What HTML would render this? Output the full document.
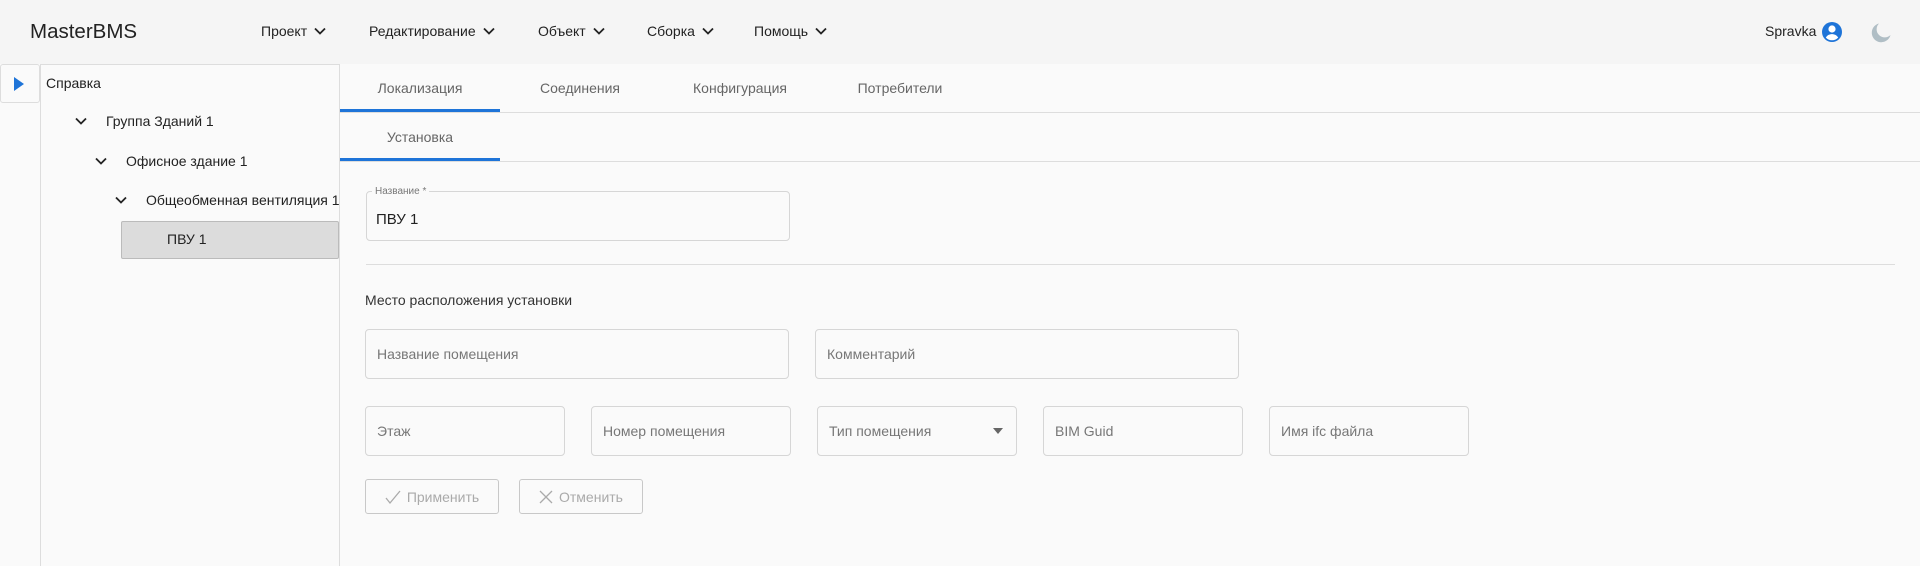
<!DOCTYPE html>
<html><head><meta charset="utf-8"><style>
*{box-sizing:border-box;margin:0;padding:0}
body{width:1920px;height:566px;overflow:hidden;background:#fafafa;font-family:"Liberation Sans","Noto Sans CJK SC",sans-serif;color:#222;position:relative}
.a{position:absolute;white-space:nowrap}
.hdr{left:0;top:0;width:1920px;height:64px;background:#f5f5f5}
.menu{font-size:14px;color:#222;top:23px}
.chev{display:inline-block;vertical-align:middle;margin-left:7px;margin-top:-3px}
.tree{font-size:14px;color:#222}
.tab{font-size:14px;color:#666;text-align:center;width:160px}
.f{border:1px solid #d6d6d6;border-radius:4px;background:#fafafa}
.ph{font-size:14px;color:#777;position:absolute;left:13px;top:50%;transform:translateY(-50%)}
.btn{border:1px solid #c8c8c8;border-radius:3px;font-size:14px;color:#aaa;display:flex;align-items:center;justify-content:center;gap:6px}
</style></head><body>
<div class="a hdr"></div>
<div class="a" style="left:30px;top:20px;font-size:20.5px;color:#222">MasterBMS</div>
<svg width="0" height="0" style="position:absolute"><defs><symbol id="cv" viewBox="0 0 12 8"><path d="M1 1.5l5 5 5-5" fill="none" stroke="#222" stroke-width="1.8"/></symbol></defs></svg>
<div class="a menu" style="left:261px">Проект<svg class="chev" width="12" height="8"><use href="#cv"/></svg></div>
<div class="a menu" style="left:369px">Редактирование<svg class="chev" width="12" height="8"><use href="#cv"/></svg></div>
<div class="a menu" style="left:538px">Объект<svg class="chev" width="12" height="8"><use href="#cv"/></svg></div>
<div class="a menu" style="left:647px">Сборка<svg class="chev" width="12" height="8"><use href="#cv"/></svg></div>
<div class="a menu" style="left:754px">Помощь<svg class="chev" width="12" height="8"><use href="#cv"/></svg></div>
<div class="a" style="left:1765px;top:23px;font-size:14px">Spravka</div>
<svg class="a" style="left:1821px;top:21px" width="22" height="22" viewBox="0 0 22 22"><circle cx="11" cy="11" r="10" fill="#1e74d8"/><circle cx="11" cy="8" r="3.6" fill="#fff"/><path d="M4.8 16.5c1.5-2.4 3.8-3.4 6.2-3.4s4.7 1 6.2 3.4c-1.6 1.8-3.8 2.8-6.2 2.8s-4.6-1-6.2-2.8z" fill="#fff"/></svg>
<svg class="a" style="left:1870px;top:22px" width="22" height="22" viewBox="0 0 22 22"><path d="M9 1.5A9.5 9.5 0 1 0 20.5 13 7 7 0 0 1 9 1.5z" fill="#b0bec5"/></svg>

<div class="a" style="left:0;top:64px;width:40px;height:39px;border:1px solid #ddd;border-radius:3px;background:#fafafa"></div>
<svg class="a" style="left:14px;top:77px" width="10" height="14"><path d="M0 0L10 7 0 14z" fill="#1e74d8"/></svg>
<div class="a" style="left:40px;top:64px;width:300px;height:502px;border-left:1px solid #ddd;border-right:1px solid #ddd;border-top:1px solid #ddd;background:#fafafa"></div>
<div class="a tree" style="left:46px;top:75px">Справка</div>
<svg class="a" style="left:75px;top:117px" width="12" height="8"><use href="#cv"/></svg>
<div class="a tree" style="left:106px;top:113px">Группа Зданий 1</div>
<svg class="a" style="left:95px;top:157px" width="12" height="8"><use href="#cv"/></svg>
<div class="a tree" style="left:126px;top:153px">Офисное здание 1</div>
<svg class="a" style="left:115px;top:196px" width="12" height="8"><use href="#cv"/></svg>
<div class="a tree" style="left:146px;top:192px;width:193px;overflow:hidden">Общеобменная вентиляция 1</div>
<div class="a" style="left:121px;top:221px;width:218px;height:38px;background:#dcdcdc;border:1px solid #bbb;border-radius:2px"></div>
<div class="a tree" style="left:167px;top:231px">ПВУ 1</div>

<div class="a tab" style="left:340px;top:80px">Локализация</div>
<div class="a tab" style="left:500px;top:80px">Соединения</div>
<div class="a tab" style="left:660px;top:80px">Конфигурация</div>
<div class="a tab" style="left:820px;top:80px">Потребители</div>
<div class="a" style="left:340px;top:112px;width:1580px;height:1px;background:#ddd"></div>
<div class="a" style="left:340px;top:109px;width:160px;height:3px;background:#1e74d8"></div>
<div class="a tab" style="left:340px;top:129px">Установка</div>
<div class="a" style="left:340px;top:161px;width:1580px;height:1px;background:#ddd"></div>
<div class="a" style="left:340px;top:158px;width:160px;height:3px;background:#1e74d8"></div>

<div class="a f" style="left:366px;top:191px;width:424px;height:50px"></div>
<div class="a" style="left:372px;top:186px;font-size:10px;color:#777;background:#fafafa;padding:0 3px">Название *</div>
<div class="a" style="left:376px;top:211px;font-size:15px;color:#222">ПВУ 1</div>
<div class="a" style="left:366px;top:264px;width:1529px;height:1px;background:#ddd"></div>
<div class="a" style="left:365px;top:292px;font-size:14px;color:#333">Место расположения установки</div>

<div class="a f" style="left:365px;top:329px;width:424px;height:50px"><span class="ph" style="left:11px">Название помещения</span></div>
<div class="a f" style="left:815px;top:329px;width:424px;height:50px"><span class="ph" style="left:11px">Комментарий</span></div>
<div class="a f" style="left:365px;top:406px;width:200px;height:50px"><span class="ph" style="left:11px">Этаж</span></div>
<div class="a f" style="left:591px;top:406px;width:200px;height:50px"><span class="ph" style="left:11px">Номер помещения</span></div>
<div class="a f" style="left:817px;top:406px;width:200px;height:50px"><span class="ph" style="left:11px">Тип помещения</span><svg style="position:absolute;left:175px;top:21px" width="10" height="6"><path d="M0 0h10L5 6z" fill="#666"/></svg></div>
<div class="a f" style="left:1043px;top:406px;width:200px;height:50px"><span class="ph" style="left:11px">BIM Guid</span></div>
<div class="a f" style="left:1269px;top:406px;width:200px;height:50px"><span class="ph" style="left:11px">Имя ifc файла</span></div>

<div class="a btn" style="left:365px;top:479px;width:134px;height:35px"><svg width="16" height="16" viewBox="0 0 16 16"><path d="M1 9l4 5L15 2" fill="none" stroke="#aaa" stroke-width="1.3"/></svg>Применить</div>
<div class="a btn" style="left:519px;top:479px;width:124px;height:35px"><svg width="14" height="14" viewBox="0 0 14 14"><path d="M1 1l12 12M13 1L1 13" fill="none" stroke="#aaa" stroke-width="1.3"/></svg>Отменить</div>
</body></html>
